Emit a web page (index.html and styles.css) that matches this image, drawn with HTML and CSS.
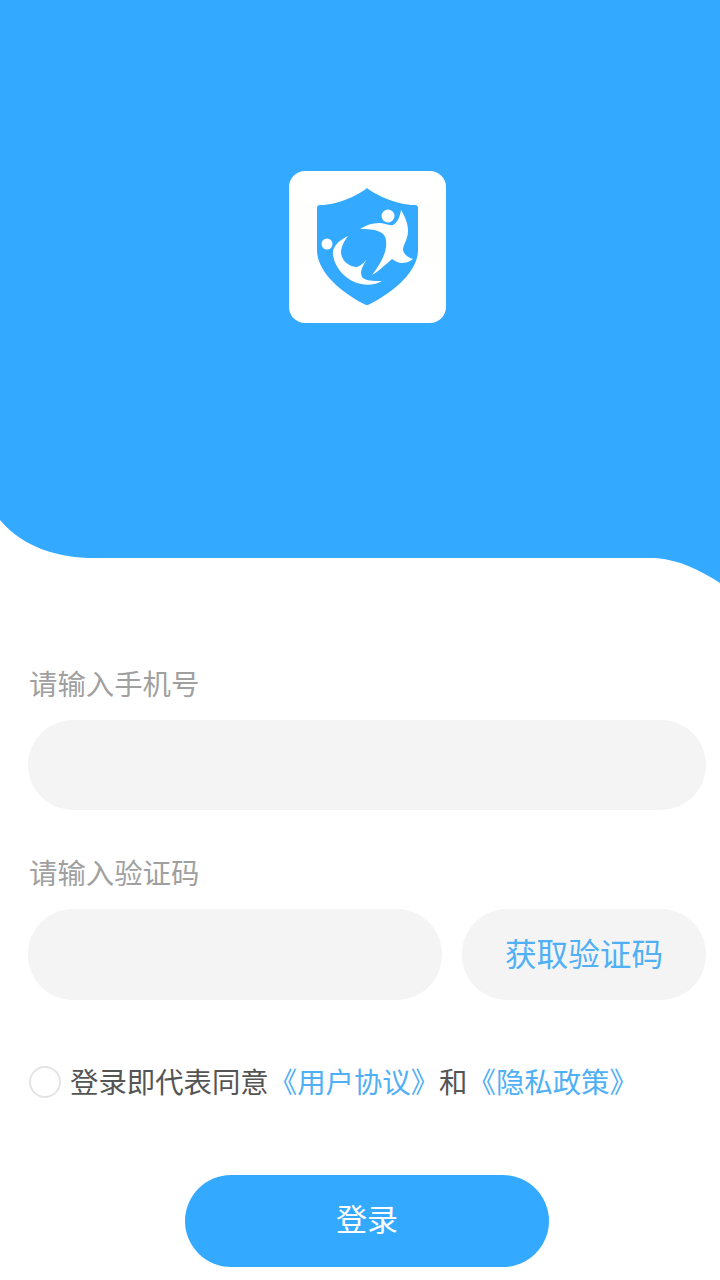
FILE: index.html
```html
<!DOCTYPE html>
<html lang="zh-CN">
<head>
  <meta charset="UTF-8">
  <title>登录</title>
  <link rel="stylesheet" href="styles.css">
</head>
<body>
  <div class="header">
    <svg class="wave" width="720" height="584" viewBox="0 0 720 584">
      <path d="M0 0H720V583C700 570 680 560 655 558H95C58 558 24 548 0 520Z" fill="#33aaff"/>
    </svg>
    <div class="logo">
      <svg width="157" height="152" viewBox="0 0 157 152">
        <path d="M78 17C71 23 50 34 31 34Q28 34 28 37V79C28 100 50 120 75 133Q78 135 81 133C106 120 129 100 129 79V37Q129 34 126 34C107 34 85 23 78 17Z" fill="#33aaff"/>
        <circle cx="99" cy="45" r="6.5" fill="#fff"/>
        <circle cx="38" cy="73" r="5.5" fill="#fff"/>
        <path d="M112 39C116 46 119 52 119 60C119 68 114 74 114 79C115 84 120 87 124 88C120 91 116 92 113 92C109 92 106 90 103 88C96 94 90 100 83 104C89 96 96 86 97 76C98 68 96 63 91 61C85 58 78 58 71 58C77 54 83 52 90 52C95 52 100 55 104 54C108 52 111 46 112 39Z" fill="#fff"/>
        <path d="M59 65C49 70 43 76 44 84C46 98 58 110 72 113C80 115 88 113 93 110C84 110 76 110 73 106C70 100 75 92 81 84C77 90 73 94 68 96C60 96 53 90 52 82C52 76 55 70 59 65Z" fill="#fff"/>
      </svg>
    </div>
  </div>

  <form class="form">
    <label class="label">请输入手机号</label>
    <input class="field" type="text">

    <label class="label code-label">请输入验证码</label>
    <div class="code-row">
      <input class="field code-input" type="text">
      <button class="code-btn" type="button">获取验证码</button>
    </div>

    <div class="agree">
      <span class="check"></span>
      <span class="agree-text">登录即代表同意<a class="link">《用户协议》</a>和<a class="link">《隐私政策》</a></span>
    </div>

    <button class="submit" type="button">登录</button>
  </form>
</body>
</html>
```

FILE: styles.css
```css
* {
  box-sizing: border-box;
}
body {
  margin: 0;
  height: 1280px;
  overflow: hidden;
  background: #fff;
  font-family: "Noto Sans CJK SC", "Noto Sans", sans-serif;
}
.header {
  position: relative;
  height: 584px;
  padding: 171px 0 0 15px;
  display: flex;
  justify-content: center;
  align-items: flex-start;
}
.wave {
  position: absolute;
  top: 0;
  left: 0;
}
.logo {
  position: relative;
  width: 157px;
  height: 152px;
  background: #fff;
  border-radius: 16px;
}
.logo svg {
  display: block;
}
.form {
  display: flex;
  flex-direction: column;
  padding: 83px 14px 0 28px;
}
.label {
  font-size: 28.4px;
  line-height: 32px;
  color: #a0a0a0;
  margin-bottom: 21px;
  padding-left: 1px;
}
.code-label {
  margin-top: 46px;
}
.field {
  display: block;
  width: 100%;
  height: 90px;
  border: none;
  border-radius: 45px;
  background: #f4f4f4;
}
.code-row {
  display: flex;
  gap: 20px;
}
.code-input {
  width: 414px;
  height: 91px;
}
.code-btn {
  flex: 1;
  border: none;
  border-radius: 45px;
  background: #f4f4f4;
  color: #4fb0f5;
  font-family: inherit;
  font-size: 31.6px;
  padding: 0 0 5px;
}
.agree {
  display: flex;
  align-items: center;
  gap: 9px;
  height: 40px;
  margin-top: 62px;
  padding-left: 1px;
  font-size: 28.4px;
  color: #555;
  white-space: nowrap;
}
.agree-text {
  padding-bottom: 3px;
}
.check {
  width: 32px;
  height: 32px;
  border: 2px solid #e4e4e4;
  border-radius: 50%;
}
.link {
  color: #4fb0f5;
}
.submit {
  align-self: center;
  width: 364px;
  height: 92px;
  margin-top: 73px;
  border: none;
  border-radius: 46px;
  background: #33aaff;
  color: #fff;
  font-family: inherit;
  font-size: 31px;
  padding: 0 0 7px;
}
```
